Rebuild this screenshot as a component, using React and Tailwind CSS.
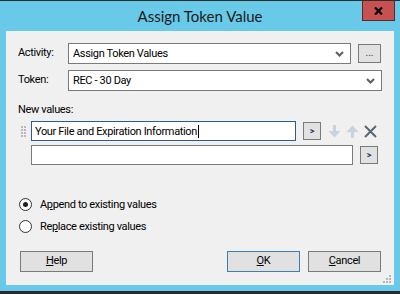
import React from "react";

const T = { fontFamily: "Lato, 'Noto Sans', sans-serif" };
const B = { fontFamily: "Roboto, 'Liberation Sans', sans-serif" };

function Chevron() {
  return (
    <svg width="9" height="6" viewBox="0 0 9 6">
      <path d="M1 1 L4.5 4.5 L8 1" fill="none" stroke="#5f5f5f" strokeWidth="2" />
    </svg>
  );
}

function Combo({ w, text }) {
  return (
    <div className={`${w} h-[21px] bg-white border border-[#7a7a7a] flex items-center pl-[4px] pr-[6px]`}>
      <span className="flex-1 leading-none">{text}</span>
      <Chevron />
    </div>
  );
}

function SmallBtn({ className }) {
  return (
    <div className={`w-[18px] h-[18px] bg-[#e1e1e1] border border-[#7a7a7a] flex items-center justify-center ${className}`}>
      <span className="text-[9px] font-bold text-[#1c2f55] leading-none tracking-normal">&gt;</span>
    </div>
  );
}

function Grip() {
  const dots = [];
  for (let r = 0; r < 4; r++)
    for (let c = 0; c < 2; c++)
      dots.push(<rect key={`${r}-${c}`} x={c * 3} y={r * 3} width="2" height="2" fill="#b9b9b9" />);
  return (
    <svg width="5" height="11" viewBox="0 0 5 11">
      {dots}
    </svg>
  );
}

function Radio({ checked }) {
  return (
    <div className="w-[13px] h-[13px] rounded-full border border-[#333] bg-white flex items-center justify-center">
      {checked && <div className="w-[5px] h-[5px] rounded-full bg-[#222]" />}
    </div>
  );
}

function Btn({ children, def, className }) {
  return (
    <div
      className={`w-[73px] h-[21px] bg-[#e1e1e1] border ${def ? "border-[#3c7fb1]" : "border-[#7a7a7a]"} flex items-center justify-center text-black ${className || ""}`}
    >
      {children}
    </div>
  );
}

export default function App() {
  return (
    <div className="relative w-[400px] h-[294px] bg-[#68c9e9] border-t border-[#2d2d2d] flex flex-col overflow-hidden">
      {/* title bar */}
      <div className="h-[30px] flex items-center justify-center" style={T}>
        <span className="text-[15px] text-[#1a1a1a] leading-none">Assign Token Value</span>
      </div>
      {/* close button */}
      <div className="absolute top-[-1px] left-[362px] w-[33px] h-[21px] bg-[#c75050] border border-[#5a2a2a] flex items-center justify-center">
        <svg width="9" height="8" viewBox="0 0 9 8">
          <path d="M1 0.5 L8 7.5 M8 0.5 L1 7.5" stroke="#000" strokeWidth="2.2" />
        </svg>
      </div>

      {/* client area */}
      <div className="relative mx-[6px] h-[254px] bg-[#f0f0f0] flex flex-col pl-[12px] pt-[12px] text-[11px] tracking-[-0.35px] text-black" style={B}>
        <div className="flex items-center h-[21px]">
          <span className="w-[50px]">Activity:</span>
          <Combo w="w-[283px]" text="Assign Token Values" />
          <div className="ml-[7px] w-[23px] h-[19px] bg-[#e1e1e1] border border-[#7a7a7a] flex items-end justify-center pb-[4px]">
            <span className="text-[10px] leading-none tracking-normal text-[#3a2a6a]">...</span>
          </div>
        </div>
        <div className="flex items-center h-[21px] mt-[6px]">
          <span className="w-[50px]">Token:</span>
          <Combo w="w-[314px]" text="REC - 30 Day" />
        </div>
        <div className="mt-[11px] h-[15px] leading-[15px]">New values:</div>
        <div className="mt-[4px] flex items-center h-[20px]">
          <div className="w-[13px] flex items-center pl-[3px]">
            <Grip />
          </div>
          <div className="w-[265px] h-[20px] bg-white border border-[#2b5d8c] flex items-center pl-[3px]">
            <span className="leading-none">Your File and Expiration Information</span>
            <span className="w-[1px] h-[13px] bg-black ml-[1px]" />
          </div>
          <SmallBtn className="ml-[7px]" />
          <svg className="ml-[7px]" width="13" height="13" viewBox="0 0 13 13">
            <path d="M6.5 0 V9" stroke="#c6d2dd" strokeWidth="3" />
            <path d="M0.5 6 L6.5 12.5 L12.5 6 Z" fill="#c6d2dd" />
          </svg>
          <svg className="ml-[5px]" width="13" height="13" viewBox="0 0 13 13">
            <path d="M6.5 13 V4" stroke="#c6d2dd" strokeWidth="3" />
            <path d="M0.5 7 L6.5 0.5 L12.5 7 Z" fill="#c6d2dd" />
          </svg>
          <svg className="ml-[5px]" width="13" height="13" viewBox="0 0 13 13">
            <path d="M1 1 L12 12 M12 1 L1 12" stroke="#5b6670" strokeWidth="2" />
          </svg>
        </div>
        <div className="mt-[4px] flex items-center h-[20px] pl-[13px]">
          <div className="w-[322px] h-[20px] bg-white border border-[#7a7a7a]" />
          <SmallBtn className="ml-[7px]" />
        </div>

        <div className="mt-[32px] flex items-center h-[14px] pl-[1px]">
          <Radio checked />
          <span className="ml-[8px] leading-none">
            A<span className="underline">p</span>pend to existing values
          </span>
        </div>
        <div className="mt-[8px] flex items-center h-[14px] pl-[1px]">
          <Radio />
          <span className="ml-[8px] leading-none">
            Re<span className="underline">p</span>lace existing values
          </span>
        </div>

        <div className="mt-[18px] flex items-center pl-[2px]">
          <Btn>
            <span className="underline">H</span>elp
          </Btn>
          <Btn def className="ml-[134px]">
            <span className="underline">O</span>K
          </Btn>
          <Btn className="ml-[8px]">
            <span className="underline">C</span>ancel
          </Btn>
        </div>

        {/* resize grip */}
        <svg className="absolute right-[3px] bottom-[2px]" width="8" height="8" viewBox="0 0 8 8">
          <rect x="6" y="0" width="2" height="2" fill="#b8b8b8" />
          <rect x="3" y="3" width="2" height="2" fill="#b8b8b8" />
          <rect x="6" y="3" width="2" height="2" fill="#b8b8b8" />
          <rect x="0" y="6" width="2" height="2" fill="#b8b8b8" />
          <rect x="3" y="6" width="2" height="2" fill="#b8b8b8" />
          <rect x="6" y="6" width="2" height="2" fill="#b8b8b8" />
        </svg>
      </div>
      <div className="flex-1" />
      <div className="h-[3px] bg-[#2b2b2b]" />
    </div>
  );
}
